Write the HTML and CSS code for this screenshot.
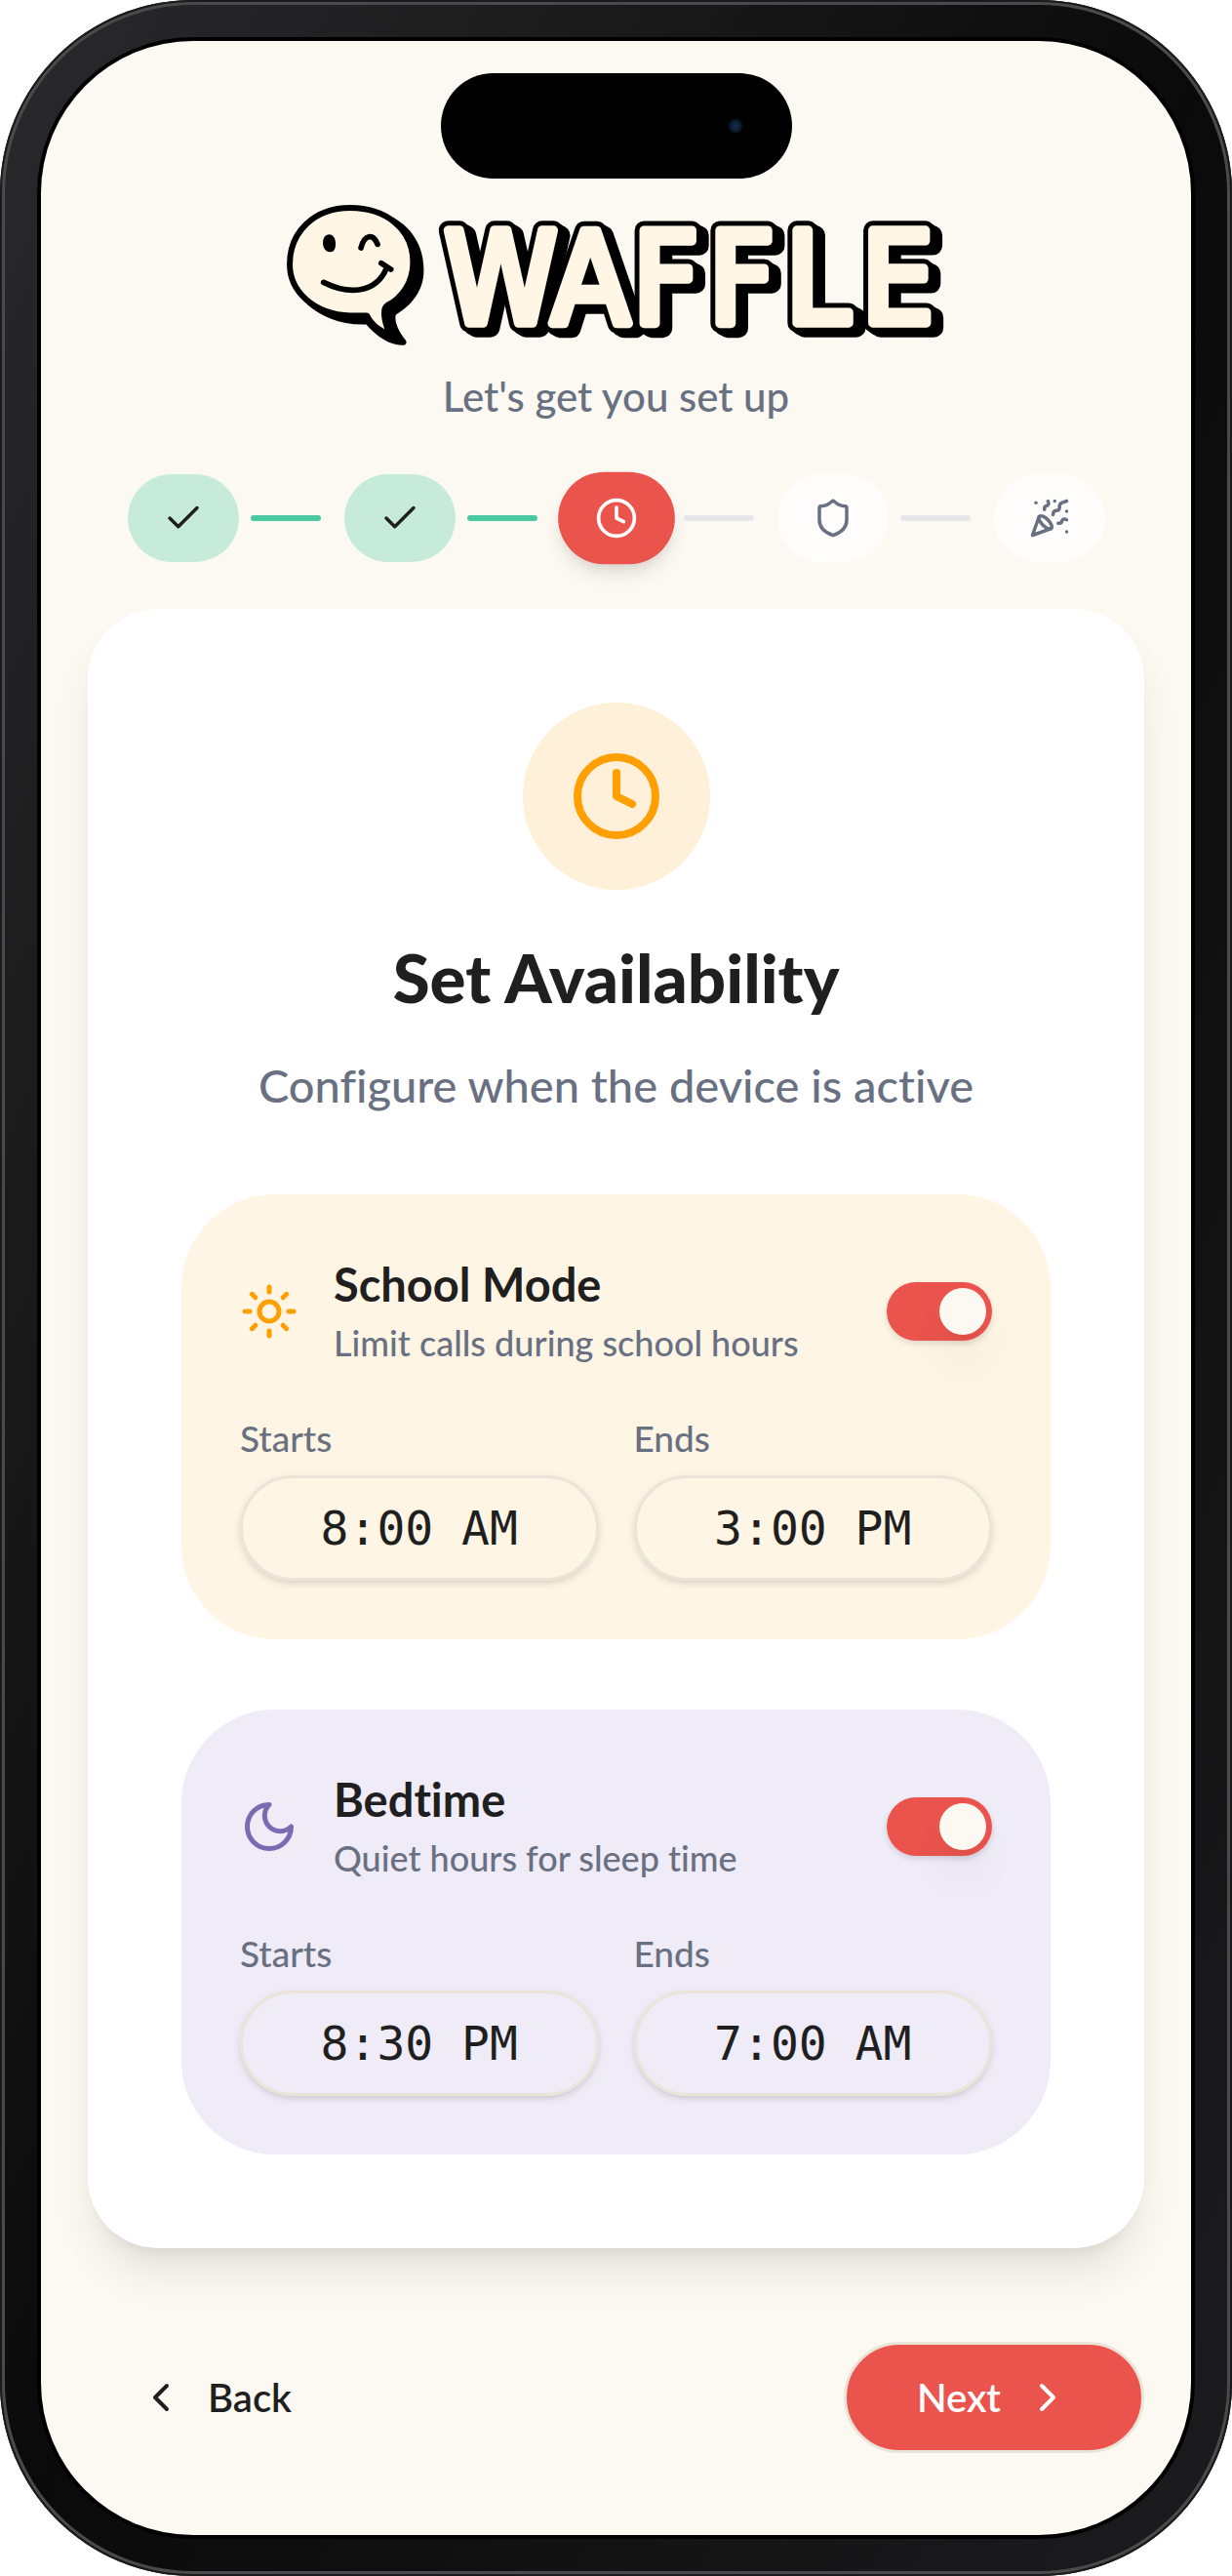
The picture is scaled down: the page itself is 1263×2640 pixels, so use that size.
FILE: index.html
```html
<!DOCTYPE html>
<html lang="en">
<head>
<meta charset="utf-8">
<meta name="viewport" content="width=device-width, initial-scale=1">
<title>Waffle setup</title>
<link rel="stylesheet" href="styles.css">
</head>
<body>
<div class="phone">
  <main class="screen">
    <div class="island"><span class="camera"></span></div>

    <header class="header">
      <svg class="logo" viewBox="40 54 2030 444" role="img" aria-label="Waffle">
        <defs>
          <text id="wordmark" class="wordmark" y="423" x="527 856 1107 1340 1577 1810">WAFFLE</text>
        </defs>
        <path d="M370 98C440 138 464 200 464 262C464 325 425 370 378 398C372 420 390 455 408 475Q415 486 404 491C360 492 320 465 287 427C210 430 150 405 105 365L200 200Z"/>
        <path d="M238 69C345 69 431 132 431 236C431 300 395 347 352 369C334 380 345 430 362 458C330 450 302 428 289 400C270 400 255 400 238 400C125 396 52 325 52 242C52 145 125 69 238 69Z" fill="#fff6e6" stroke="#000" stroke-width="18" stroke-linejoin="round"/>
        <path d="M173 151C186 151 193 164 193 180C193 196 187 205 177 205C163 205 154 193 154 177C154 162 161 151 173 151Z"/>
        <g fill="none" stroke="#000" stroke-width="17" stroke-linecap="round" stroke-linejoin="round">
          <path d="M271 192C282 150 308 148 322 181"/>
          <path d="M156 298C232 336 316 334 350 254"/>
          <path d="M333 239L363 258"/>
        </g>
        <use href="#wordmark" class="word-edge" x="23" y="16"/>
        <use href="#wordmark" class="word-edge" x="12" y="8"/>
        <use href="#wordmark" class="word-edge"/>
        <use href="#wordmark" class="word-face"/>
      </svg>
      <p class="tagline">Let's get you set up</p>
    </header>

    <ol class="steps">
      <li class="step done">
        <span class="pill"><svg class="icon icon-s" viewBox="0 0 24 24"><path d="M20 6 9 17l-5-5"/></svg></span>
      </li>
      <li class="step done">
        <span class="pill"><svg class="icon icon-s" viewBox="0 0 24 24"><path d="M20 6 9 17l-5-5"/></svg></span>
      </li>
      <li class="step current" aria-current="step">
        <span class="pill"><svg class="icon icon-s" viewBox="0 0 24 24"><circle cx="12" cy="12" r="10"/><path d="M12 6v6l4 2"/></svg></span>
      </li>
      <li class="step">
        <span class="pill"><svg class="icon icon-s" viewBox="0 0 24 24"><path d="M20 13c0 5-3.5 7.5-7.66 8.95a1 1 0 0 1-.67-.01C7.5 20.5 4 18 4 13V6a1 1 0 0 1 1-1c2 0 4.5-1.2 6.24-2.72a1.17 1.17 0 0 1 1.52 0C14.51 3.81 17 5 19 5a1 1 0 0 1 1 1z"/></svg></span>
      </li>
      <li class="step">
        <span class="pill"><svg class="icon icon-s" viewBox="0 0 24 24"><path d="M5.8 11.3 2 22l10.7-3.79"/><path d="M4 3h.01"/><path d="M22 8h.01"/><path d="M15 2h.01"/><path d="M22 20h.01"/><path d="m22 2-2.24.75a2.9 2.9 0 0 0-1.96 3.12c.1.86-.57 1.63-1.45 1.63h-.38c-.86 0-1.6.6-1.76 1.44L14 10"/><path d="m22 13-.82-.33c-.86-.34-1.82.2-1.98 1.11c-.11.7-.72 1.22-1.43 1.22H17"/><path d="m11 2 .33.82c.34.86-.2 1.82-1.11 1.98C9.52 4.9 9 5.52 9 6.23V7"/><path d="M11 13c1.93 1.93 2.83 4.17 2 5-.83.83-3.07-.07-5-2-1.93-1.93-2.83-4.17-2-5 .83-.83 3.07.07 5 2Z"/></svg></span>
      </li>
    </ol>

    <section class="card">
      <div class="badge"><svg class="icon icon-l" viewBox="0 0 24 24"><circle cx="12" cy="12" r="10"/><path d="M12 6v6l4 2"/></svg></div>
      <h1 class="title">Set Availability</h1>
      <p class="subtitle">Configure when the device is active</p>

      <div class="panels">
        <section class="panel school">
          <div class="mode">
            <svg class="icon icon-m" viewBox="0 0 24 24"><circle cx="12" cy="12" r="4"/><path d="M12 2v2"/><path d="M12 20v2"/><path d="m4.93 4.93 1.41 1.41"/><path d="m17.66 17.66 1.41 1.41"/><path d="M2 12h2"/><path d="M20 12h2"/><path d="m6.34 17.66-1.41 1.41"/><path d="m19.07 4.93-1.41 1.41"/></svg>
            <label class="mode-text" for="school">
              <span class="mode-name">School Mode</span>
              <span class="mode-note">Limit calls during school hours</span>
            </label>
            <input class="toggle" type="checkbox" role="switch" id="school" checked>
          </div>
          <div class="times">
            <div class="field"><label for="school-start">Starts</label><input class="time" type="text" id="school-start" value="8:00 AM"></div>
            <div class="field"><label for="school-end">Ends</label><input class="time" type="text" id="school-end" value="3:00 PM"></div>
          </div>
        </section>

        <section class="panel bedtime">
          <div class="mode">
            <svg class="icon icon-m" viewBox="0 0 24 24"><path d="M12 3a6 6 0 0 0 9 9 9 9 0 1 1-9-9Z"/></svg>
            <label class="mode-text" for="bed">
              <span class="mode-name">Bedtime</span>
              <span class="mode-note">Quiet hours for sleep time</span>
            </label>
            <input class="toggle" type="checkbox" role="switch" id="bed" checked>
          </div>
          <div class="times">
            <div class="field"><label for="bed-start">Starts</label><input class="time" type="text" id="bed-start" value="8:30 PM"></div>
            <div class="field"><label for="bed-end">Ends</label><input class="time" type="text" id="bed-end" value="7:00 AM"></div>
          </div>
        </section>
      </div>
    </section>

    <nav class="actions">
      <button class="btn back" type="button"><svg class="icon icon-b" viewBox="0 0 24 24"><path d="m15 18-6-6 6-6"/></svg>Back</button>
      <button class="btn next" type="button">Next<svg class="icon icon-b" viewBox="0 0 24 24"><path d="m9 18 6-6-6-6"/></svg></button>
    </nav>
  </main>
</div>
</body>
</html>
```
FILE: styles.css
```css
:root {
  --cream: #fcf9f2;
  --ink: #1f1f1f;
  --muted: #687082;
  --red: #eb544d;
  --green: #4bc9a1;
  --mint: #c7ebdb;
  --orange: #ffa000;
  --line: #ebe4d8;
  --lift: 0 30px 45px -9px rgba(0, 0, 0, .1), 0 12px 18px -12px rgba(0, 0, 0, .1);
}

* { box-sizing: border-box; }

body {
  margin: 0;
  background: #fff;
  color: var(--ink);
  font-family: Lato, "Open Sans", sans-serif;
  font-weight: 500;
  font-variant-ligatures: none;
}

p, h1, ol { margin: 0; }

.phone {
  display: flex;
  min-height: 100vh;
  padding: 42px;
  border-radius: 198px;
  background: linear-gradient(to bottom right, #2a2a2c 0%, #0a0a0a 50%, #1c1c1e 100%);
  box-shadow: inset 0 0 0 2px #1a1a1a, inset 0 0 0 5px #4a4a4c;
}

.screen {
  flex: 1;
  min-width: 0;
  padding: 33px 48px 84px;
  border-radius: 156px;
  background: var(--cream);
  box-shadow: 0 0 0 4px #000;
}

.island {
  display: flex;
  align-items: center;
  justify-content: flex-end;
  width: 360px;
  height: 108px;
  margin: 0 auto;
  padding-right: 50px;
  border-radius: 54px;
  background: #000;
}

.camera {
  width: 16px;
  height: 16px;
  border-radius: 50%;
  background: radial-gradient(circle, #14304e 0%, #0a1a2c 50%, #000 72%);
}

.header {
  display: flex;
  flex-direction: column;
  align-items: center;
  padding-top: 25px;
}

.logo { width: 677px; max-width: 100%; height: auto; }

.wordmark {
  font-family: "Liberation Sans Narrow", "DejaVu Sans Condensed", sans-serif;
  font-size: 390px;
  font-weight: 400;
  stroke-linejoin: round;
}

.word-edge { fill: #000; stroke: #000; stroke-width: 58px; }
.word-face { fill: #fff6e6; stroke: #fff6e6; stroke-width: 28px; }

.tagline {
  margin-top: 20px;
  color: var(--muted);
  font-size: 42px;
  line-height: 60px;
}

.icon {
  flex: none;
  display: block;
  fill: none;
  stroke: currentColor;
  stroke-width: 2;
  stroke-linecap: round;
  stroke-linejoin: round;
}

.icon-s { width: 42px; height: 42px; }
.icon-b { width: 48px; height: 48px; }
.icon-m { width: 60px; height: 60px; }
.icon-l { width: 96px; height: 96px; }

.steps {
  display: flex;
  justify-content: center;
  margin-top: 50px;
  padding: 0;
  list-style: none;
}

.step { display: flex; align-items: center; }

.step:not(:last-child)::after {
  content: "";
  width: 72px;
  height: 6px;
  margin: 0 24px 0 12px;
  border-radius: 3px;
  background: #e5e7eb;
}

.step.done:not(:last-child)::after { background: var(--green); }

.pill {
  display: grid;
  place-items: center;
  width: 114px;
  height: 90px;
  border-radius: 45px;
  background: #fffdfb;
  color: var(--muted);
}

.done .pill { background: var(--mint); color: var(--ink); }

.current .pill {
  background: var(--red);
  color: #fff;
  transform: scale(1.05);
  box-shadow: 0 12px 18px -3px rgba(0, 0, 0, .1), 0 6px 12px -6px rgba(0, 0, 0, .1);
}

.card {
  margin-top: 48px;
  padding: 96px;
  border-radius: 72px;
  background: #fff;
  box-shadow: var(--lift);
  text-align: center;
}

.badge {
  display: grid;
  place-items: center;
  width: 192px;
  height: 192px;
  margin: 0 auto 48px;
  border-radius: 50%;
  background: #fff0da;
  color: var(--orange);
}

.title { font-size: 69px; font-weight: 900; line-height: 84px; }

.subtitle {
  margin-top: 32px;
  color: var(--muted);
  font-size: 47px;
  line-height: 72px;
}

.panels { display: grid; gap: 72px; margin-top: 76px; text-align: left; }

.panel { padding: 60px; border-radius: 96px; }
.school { background: #fff5e4; }
.bedtime { background: #efebf7; }
.school .icon { color: var(--orange); }
.bedtime .icon { color: #7c6bb3; }

.mode { display: flex; align-items: center; gap: 36px; height: 120px; }
.mode-text { flex: 1; padding-top: 4px; }
.mode-name, .mode-note { display: block; }
.mode-name { font-size: 47px; font-weight: 700; line-height: 60px; }
.mode-note { color: var(--muted); font-size: 36px; line-height: 60px; }

.toggle {
  appearance: none;
  flex: none;
  display: flex;
  justify-content: flex-start;
  width: 108px;
  height: 60px;
  margin: 0;
  padding: 6px;
  border-radius: 30px;
  background: #d8d4cc;
  box-shadow: 0 3px 6px rgba(0, 0, 0, .12);
}

.toggle:checked { justify-content: flex-end; background: var(--red); }

.toggle::before {
  content: "";
  width: 48px;
  height: 48px;
  border-radius: 50%;
  background: var(--cream);
  box-shadow: var(--lift);
}

.times { display: grid; grid-template-columns: 1fr 1fr; gap: 36px; margin-top: 40px; }

.field label {
  display: block;
  margin-bottom: 8px;
  color: var(--muted);
  font-size: 37px;
  line-height: 60px;
}

.time {
  display: block;
  width: 100%;
  height: 108px;
  padding: 0;
  border: 3px solid var(--line);
  border-radius: 54px;
  background: transparent;
  box-shadow: 0 3px 9px rgba(0, 0, 0, .1), 0 3px 6px -3px rgba(0, 0, 0, .1);
  color: var(--ink);
  font: 48px "DejaVu Sans Mono", monospace;
  text-align: center;
}

.actions { display: flex; justify-content: space-between; margin-top: 96px; }

.btn {
  display: flex;
  align-items: center;
  gap: 24px;
  height: 114px;
  padding: 0 72px;
  border: 3px solid transparent;
  border-radius: 57px;
  background: none;
  color: var(--ink);
  font: 600 40px Lato, "Open Sans", sans-serif;
}

.back { padding: 0 48px; }
.next { border-color: var(--line); background: var(--red); color: #fff; }
```
